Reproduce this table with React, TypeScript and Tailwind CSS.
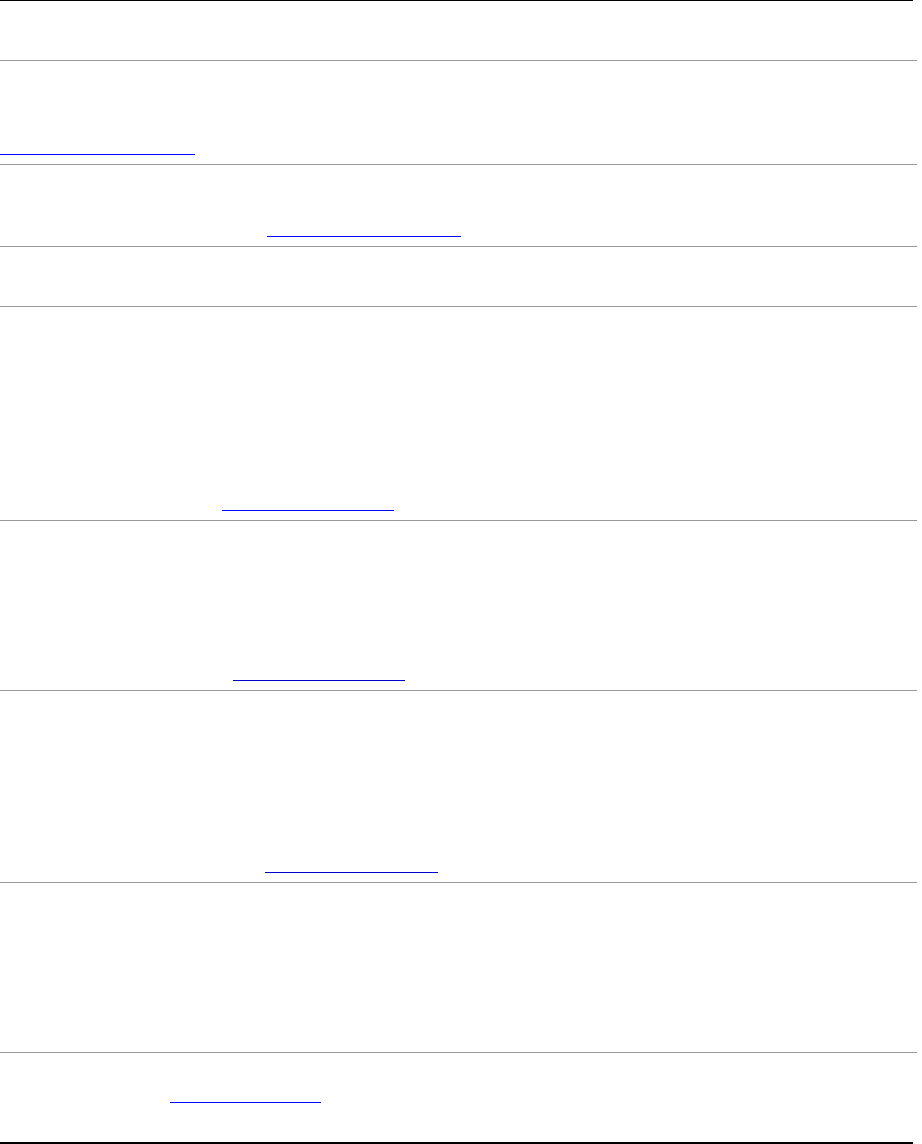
const ROWS: { h: string; link?: string }[] = [
  { h: 'h-[59px]' },
  { h: 'h-[103px] pb-[9px]', link: 'w-[195px] bg-[#0000ff]' },
  { h: 'h-[81px] pb-[9px]', link: 'ml-[267px] w-[194px] bg-[#0000ff]' },
  { h: 'h-[59px]' },
  { h: 'h-[213px] pb-[9px]', link: 'ml-[222px] w-[172px] bg-[#0000ff]' },
  { h: 'h-[169px] pb-[9px]', link: 'ml-[233px] w-[172px] bg-[#0000cc]' },
  { h: 'h-[191px] pb-[9px]', link: 'ml-[265px] w-[173px] bg-[#0000cc]' },
  { h: 'h-[169px]' },
];

export default function App() {
  return (
    <div className="w-[922px] h-[1144px] bg-white font-['Liberation_Sans',Arial,sans-serif] text-white">
      <div className="h-px w-[913px] bg-black" />
      {ROWS.map((row, i) => (
        <div key={i}>
          <div className={`flex flex-col justify-end ${row.h}`}>
            {row.link && <a href="#" className={`block h-px shrink-0 ${row.link}`} />}
          </div>
          <div className="h-px w-[917px] bg-[#999999]" />
        </div>
      ))}
      {/* last row, link sits mid-row */}
      <div className="h-[89px] pt-[49px]">
        <a href="#" className="block h-px ml-[170px] w-[151px] bg-[#0000ff]" />
      </div>
      <div className="h-[2px] w-[913px] bg-black" />
    </div>
  );
}
